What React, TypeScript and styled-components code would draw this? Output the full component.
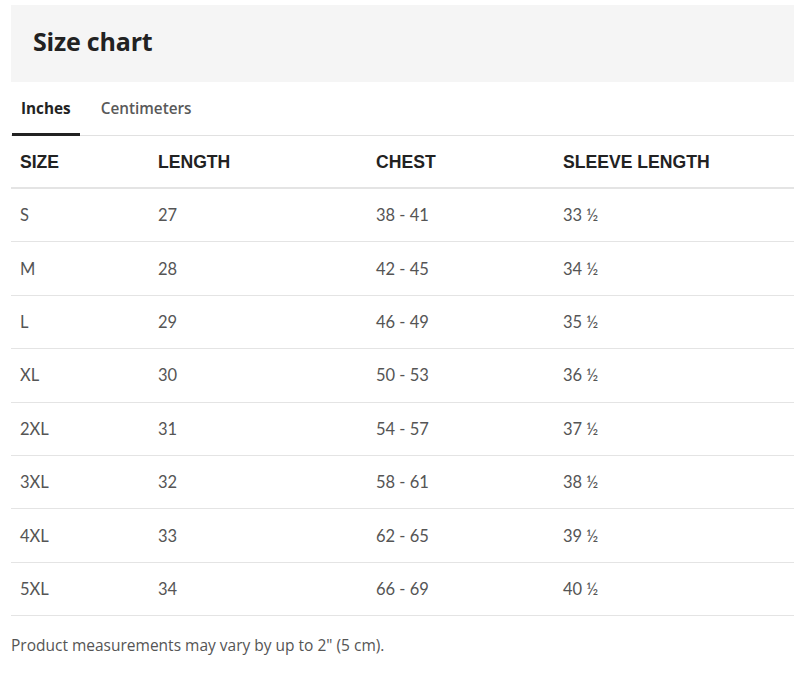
import React, { useState } from "react";
import styled, { createGlobalStyle } from "styled-components";

const Global = createGlobalStyle`
  html, body { margin: 0; padding: 0; background: #ffffff; }
  body { font-family: "Lato", "Open Sans", Arial, sans-serif; overflow: hidden; }
`;

const Page = styled.div`
  padding: 5px 0 0 11px;
  width: 783px;
`;

const Header = styled.div`
  background: #f5f5f5;
  height: 77px;
  box-sizing: border-box;
  display: flex;
  align-items: center;
  padding: 0 0 5px 22px;
`;

const Title = styled.h2`
  margin: 0;
  font-family: "Open Sans", sans-serif;
  font-weight: 700;
  font-size: 25px;
  color: #222222;
  letter-spacing: -0.2px;
`;

const Tabs = styled.div`
  display: flex;
  gap: 11px;
  height: 53px;
  align-items: stretch;
  border-bottom: 1px solid #e1e1e1;
`;

const Tab = styled.button<{ $active: boolean }>`
  border: 0;
  background: none;
  padding: 0 9px;
  margin: 0 0 -1px 1px;
  font-family: "Open Sans", sans-serif;
  font-size: 15.3px;
  font-weight: ${(p) => (p.$active ? 700 : 600)};
  color: ${(p) => (p.$active ? "#222222" : "#595959")};
  border-bottom: 3px solid ${(p) => (p.$active ? "#222222" : "transparent")};
  padding-top: 1px;
  cursor: pointer;
`;

const Table = styled.table`
  width: 100%;
  border-collapse: collapse;
  table-layout: fixed;
`;

const Col = styled.col<{ $w?: number }>`
  width: ${(p) => (p.$w ? `${p.$w}px` : "auto")};
`;

const Th = styled.th`
  text-align: left;
  font-family: "Liberation Sans", Arial, sans-serif;
  font-weight: 700;
  font-size: 17.6px;
  color: #222222;
  height: 49px;
  padding: 2px 0 0 9px;
  border-bottom: 2px solid #e4e4e4;
`;

const Td = styled.td`
  font-family: "Lato", sans-serif;
  font-size: 16.5px;
  color: #555555;
  height: 52.4px;
  padding: 0 0 0 9px;
  border-bottom: 1px solid #e4e4e4;
`;

const Note = styled.p`
  margin: 18px 0 0;
  font-family: "Open Sans", sans-serif;
  font-size: 15.5px;
  color: #555555;
`;

const rows = [
  ["S", "27", "38 - 41", "33 ½"],
  ["M", "28", "42 - 45", "34 ½"],
  ["L", "29", "46 - 49", "35 ½"],
  ["XL", "30", "50 - 53", "36 ½"],
  ["2XL", "31", "54 - 57", "37 ½"],
  ["3XL", "32", "58 - 61", "38 ½"],
  ["4XL", "33", "62 - 65", "39 ½"],
  ["5XL", "34", "66 - 69", "40 ½"],
];

export default function App() {
  const [tab, setTab] = useState("in");
  return (
    <Page>
      <Global />
      <Header>
        <Title>Size chart</Title>
      </Header>
      <Tabs>
        <Tab $active={tab === "in"} onClick={() => setTab("in")}>Inches</Tab>
        <Tab $active={tab === "cm"} onClick={() => setTab("cm")}>Centimeters</Tab>
      </Tabs>
      <Table>
        <colgroup>
          <Col $w={138} />
          <Col $w={218} />
          <Col $w={187} />
          <Col />
        </colgroup>
        <thead>
          <tr>
            <Th>SIZE</Th>
            <Th>LENGTH</Th>
            <Th>CHEST</Th>
            <Th>SLEEVE LENGTH</Th>
          </tr>
        </thead>
        <tbody>
          {rows.map((r) => (
            <tr key={r[0]}>
              {r.map((c, i) => (
                <Td key={i}>{c}</Td>
              ))}
            </tr>
          ))}
        </tbody>
      </Table>
      <Note>Product measurements may vary by up to 2" (5 cm).</Note>
    </Page>
  );
}
